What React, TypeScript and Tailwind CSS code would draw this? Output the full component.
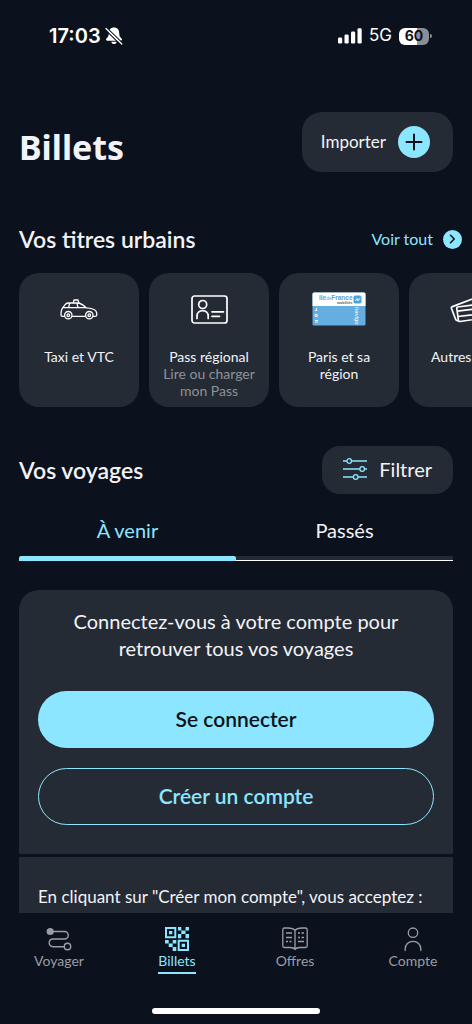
import React, { useState } from 'react';

type Tab = 'upcoming' | 'past';

function MutedBell() {
  return (
    <svg width="18" height="18" viewBox="0 0 18 18" aria-hidden="true">
      <path d="M9 .5c-3.300 0-5 2.200-5.200 5.200-.1 2.700-.4 3.700-1.600 5-.8.800-1.200 1.200-1.200 1.900 0 .7.500 1.100 1.300 1.100h13.400c.8 0 1.300-.4 1.300-1.100 0-.7-.4-1.100-1.200-1.900-1.200-1.300-1.500-2.300-1.600-5C14 2.700 12.300.5 9 .5Z" fill="#fff" />
      <path d="M6.300 14.700h5.400c-.3 1.400-1.300 2.300-2.700 2.300s-2.400-.9-2.700-2.300Z" fill="#fff" />
      <path d="M1.600.7 17.600 16.200" stroke="#0c121d" strokeWidth="1.300" />
      <path d="M0 2.500 15.800 18" stroke="#0c121d" strokeWidth="1.100" />
      <path d="M1 1.500 16.800 17" stroke="#fff" strokeWidth="1.300" strokeLinecap="round" />
    </svg>
  );
}

function Signal() {
  return (
    <svg width="24" height="16" viewBox="0 0 24 16" fill="#fff" aria-hidden="true">
      <rect x="0" y="9.500" width="4.200" height="6" rx="1.300" />
      <rect x="6.500" y="6.500" width="4.200" height="9" rx="1.300" />
      <rect x="13" y="3.500" width="4.200" height="12" rx="1.300" />
      <rect x="19.500" y="0.300" width="4.200" height="15.200" rx="1.300" />
    </svg>
  );
}

function StatusBar() {
  return (
    <div className="flex h-[72px] shrink-0 items-center justify-between pr-10 pl-[49px] font-['Inter',sans-serif] text-white">
      <div className="flex items-center gap-1">
        <span className="text-xl font-semibold">17:03</span>
        <MutedBell />
      </div>
      <div className="flex items-center gap-[7px]">
        <Signal />
        <span className="text-[17px]">5G</span>
        <div className="flex items-center gap-px">
          <span className="flex h-[17px] w-[30px] items-center justify-center rounded-md bg-linear-to-r from-white from-60% to-[#8b8e94] to-60% text-sm font-bold text-[#0c121d]">
            60
          </span>
          <span className="h-1 w-0.5 rounded-r-full bg-[#8b8e94]" />
        </div>
      </div>
    </div>
  );
}

function TaxiIcon() {
  return (
    <svg width="38" height="21" viewBox="0 0 38 21" fill="none" stroke="#fff" strokeWidth="1.300" strokeLinejoin="round" strokeLinecap="round" aria-hidden="true">
      <path d="M4.300 17.300H2.400c-.9 0-1.400-.5-1.400-1.300 0-3 .3-5.800 1.800-7.300L5.500 5.200C6.300 4.300 7.300 4 8.500 4h9c3 0 5.500 1.700 8.600 4.800 4.600.3 8.500 1.200 9.800 3.200.7 1.100.9 2.500.9 3.800 0 1-.5 1.500-1.400 1.500h-2.200M12.200 17.300h13M2.800 8.700h23.300M9.700 4.200 8.600 8.500M17 4l.9 4.600" />
      <path d="M13.300 3.800 14 1h4l.8 2.900" />
      <circle cx="8.300" cy="16.200" r="3.700" />
      <circle cx="8.300" cy="16.200" r="1.300" />
      <circle cx="29.300" cy="16.200" r="3.700" />
      <circle cx="29.300" cy="16.200" r="1.300" />
    </svg>
  );
}

function BadgeIcon() {
  return (
    <svg width="37" height="29" viewBox="0 0 37 29" fill="none" stroke="#fff" strokeWidth="1.700" strokeLinecap="round" aria-hidden="true">
      <rect x="1" y="1" width="35" height="27" rx="2.500" />
      <circle cx="11.700" cy="9.500" r="4" />
      <path d="M6 23.500v-2.300c0-3.400 2.400-5.500 5.600-5.500s5.600 2.100 5.600 5.500v2.300M21 16.800h11.500M21 21.300h7.500" />
    </svg>
  );
}

function NavigoCard() {
  return (
    <svg width="54" height="34" viewBox="0 0 54 34" fontFamily="'Liberation Sans', Arial, sans-serif" aria-hidden="true">
      <rect x="0.500" y="0.500" width="53" height="33" rx="1.500" fill="#64aee0" />
      <path d="M.5 14V2Q.5.500 2 .5h50q1.500 0 1.500 1.500v12Z" fill="#fff" />
      <text x="7" y="8" fontSize="6.500" fontWeight="bold" fill="#5c9ed2">
        île<tspan fontSize="4.500" fontWeight="normal">de</tspan>France
      </text>
      <text x="25" y="12" fontSize="3.500" fontWeight="bold" fill="#55565c">mobilités</text>
      <rect x="41.500" y="3.500" width="8" height="8" rx="1.800" fill="#4f9fd8" />
      <path d="m43.200 9 2-2.500.6 2.500 2.500-3.200" stroke="#fff" strokeWidth="0.900" fill="none" />
      <text transform="translate(43 15) rotate(90)" fontSize="6" fill="#fff">navigo</text>
      <path d="M4.500 16v3M3 18.500h2M3.200 22.500h2v2h-2zM3 28.500h3M3 30h3" stroke="#fff" strokeWidth="0.900" fill="none" />
    </svg>
  );
}

function TicketsIcon() {
  return (
    <svg width="38" height="27" viewBox="0 0 38 27" fill="none" stroke="#fff" strokeWidth="1.700" strokeLinejoin="round" strokeLinecap="round" aria-hidden="true">
      <path d="M7.500 11 35 7.500c.9-.1 1.400.3 1.500 1.200l1 11.500c.1.900-.3 1.400-1.200 1.500L10 25.500c-.9.100-1.500-.3-1.600-1.200L6.800 12.500c-.1-.9 0-1.400.7-1.500ZM7.300 15.200l29.500-3.700M8 20.500l29-3.500" />
      <path d="M8.300 24.500c-1.400.5-2 .2-2.500-.8L1.500 12.500c-.3-.9 0-1.500.9-1.900L27 1.200c.9-.3 1.600 0 2 .8l2 5.800" />
    </svg>
  );
}

function FilterIcon() {
  return (
    <svg width="24" height="22" viewBox="0 0 24 22" fill="none" stroke="#8ce6ff" strokeWidth="1.300" aria-hidden="true">
      <path d="M0 3h3.900M8.500 3H24M0 11h16.900M21.500 11H24M0 19h10.400M15 19h9" />
      <circle cx="6.200" cy="3" r="2.300" />
      <circle cx="19.200" cy="11" r="2.300" />
      <circle cx="12.700" cy="19" r="2.300" />
    </svg>
  );
}

function RouteIcon() {
  return (
    <svg width="26" height="24" viewBox="0 0 26 24" fill="none" stroke="currentColor" strokeWidth="1.400" aria-hidden="true">
      <circle cx="4.200" cy="4.500" r="3.600" fill="currentColor" stroke="none" />
      <path d="M5 4.500h13.500a3.700 3.700 0 0 1 0 7.500H6.500a3.900 3.900 0 0 0 0 7.700H18" />
      <circle cx="21.500" cy="19.500" r="3.200" />
    </svg>
  );
}

function QrIcon() {
  return (
    <svg width="24" height="24" viewBox="0 0 24 24" fill="currentColor" aria-hidden="true">
      <path fillRule="evenodd" d="M0 0h11.300v11.300H0zM2 2v7.300h7.300V2zM12.700 12.700H24V24H12.700zM14.700 14.700V22H22v-7.300z" />
      <path d="M4 4h3.300v3.300H4zM16.700 16.700H20V20h-3.300zM13 0h3.300v3.500H13zM20.500 0H24v3.500h-3.500zM16.300 3.500h4.200V7h-4.200zM13 7h3.300v4.300H13zM20.500 7H24v4.300h-3.500zM0 13h3.700v3.500H0zM3.700 16.500h4V20h-4zM7.700 13h3.600v3.500H7.700zM7.700 20h3.600v4H7.700z" />
    </svg>
  );
}

function BookIcon() {
  return (
    <svg width="26" height="24" viewBox="0 0 26 24" fill="none" stroke="currentColor" strokeWidth="1.300" strokeLinejoin="round" aria-hidden="true">
      <path d="M13 3.500C11.500 1.500 9 1 6 1H2.500C1.500 1 .8 1.600.8 2.500V19c0 .9.600 1.500 1.500 1.500H8c2.500 0 4.200.6 5 2 .8-1.400 2.500-2 5-2h5.700c.9 0 1.500-.6 1.500-1.500V2.500c0-.9-.7-1.500-1.700-1.500H20c-3 0-5.500.5-7 2.500Zm0 0v19" />
      <path d="M4 6h6M4 10.500h6M4 14.500h2M7.500 14.500h2M16 6h2M19.500 6H22M16 10.500h2M19.500 10.500H22M16 14.500h6" strokeWidth="1.700" />
    </svg>
  );
}

function PersonIcon() {
  return (
    <svg width="18" height="25" viewBox="0 0 18 25" fill="none" stroke="currentColor" strokeWidth="1.300" strokeLinecap="round" aria-hidden="true">
      <circle cx="9" cy="5.700" r="4.700" />
      <path d="M1.200 23.500V22c0-4.500 3.300-7.600 7.800-7.600s7.800 3.100 7.800 7.600v1.500" />
    </svg>
  );
}

const passes = [
  { title: 'Taxi et VTC', icon: <TaxiIcon /> },
  { title: 'Pass régional', note: 'Lire ou charger mon Pass', icon: <BadgeIcon /> },
  { title: 'Paris et sa région', icon: <NavigoCard /> },
  { title: 'Autres titres', icon: <TicketsIcon /> },
];

const navItems = [
  { label: 'Voyager', icon: <RouteIcon /> },
  { label: 'Billets', icon: <QrIcon />, active: true },
  { label: 'Offres', icon: <BookIcon /> },
  { label: 'Compte', icon: <PersonIcon /> },
];

function App() {
  const [tab, setTab] = useState<Tab>('upcoming');

  const tabs: { id: Tab; label: string }[] = [
    { id: 'upcoming', label: 'À venir' },
    { id: 'past', label: 'Passés' },
  ];

  return (
    <div className="flex h-dvh flex-col bg-[#0c121d] font-['Lato',sans-serif] text-[#f3f3f7]">
      <StatusBar />

      <main className="min-h-0 flex-1 overflow-x-hidden overflow-y-auto pt-10 [scrollbar-width:none]">
        <header className="flex items-end justify-between px-[19px]">
          <h1 className="font-['Noto_Sans',sans-serif] text-[34px] leading-[50px] font-bold">Billets</h1>
          <button type="button" className="flex h-[60px] items-center gap-3 rounded-[20px] bg-[#252b35] pr-[23px] pl-[19px] text-[17px]">
            Importer
            <span className="flex size-8 items-center justify-center rounded-full bg-[#8ce6ff]">
              <svg width="18" height="18" viewBox="0 0 18 18" stroke="#0c121d" strokeWidth="2" strokeLinecap="round" aria-hidden="true">
                <path d="M9 1.500v15M1.500 9h15" />
              </svg>
            </span>
          </button>
        </header>

        {/* Urban passes */}
        <section>
          <div className="mt-[53px] flex h-7 items-center justify-between pr-[10px] pl-[19px]">
            <h2 className="text-[23px] leading-7 font-semibold">Vos titres urbains</h2>
            <a href="#titres" className="flex items-center gap-[10px] text-base text-[#8ce6ff]">
              Voir tout
              <span className="flex size-[19px] items-center justify-center rounded-full bg-[#8ce6ff]">
                <svg width="7" height="10" viewBox="0 0 7 10" fill="none" stroke="#0c121d" strokeWidth="1.600" strokeLinecap="round" strokeLinejoin="round" aria-hidden="true">
                  <path d="m1.500 1.300 3.700 3.700-3.700 3.700" />
                </svg>
              </span>
            </a>
          </div>
          <div className="mt-5 flex gap-[10px] overflow-x-auto px-[19px] [scrollbar-width:none]">
            {passes.map((pass) => (
              <button
                key={pass.title}
                type="button"
                className="flex min-h-[134px] w-[120px] shrink-0 flex-col items-center rounded-[20px] bg-[#252b35] px-2 pt-[17px] pb-2 text-sm leading-[17px]"
              >
                <span className="mb-5 flex h-[38px] items-center">{pass.icon}</span>
                <span className="px-2">{pass.title}</span>
                {pass.note && <span className="text-[#8d9199]">{pass.note}</span>}
              </button>
            ))}
          </div>
        </section>

        {/* Trips */}
        <section className="mt-[39px] px-[19px]">
          <div className="flex items-center justify-between">
            <h2 className="text-[23px] leading-7 font-semibold">Vos voyages</h2>
            <button type="button" className="flex h-12 items-center gap-3 rounded-[18px] bg-[#252b35] px-[21px] pb-0.5 text-xl">
              <FilterIcon />
              Filtrer
            </button>
          </div>

          <div role="tablist" className="grid grid-cols-2">
            {tabs.map(({ id, label }) => (
              <button
                key={id}
                type="button"
                role="tab"
                aria-selected={tab === id}
                onClick={() => setTab(id)}
                className={`flex flex-col pt-[23px] text-xl leading-[26px] ${tab === id ? 'text-[#8ce6ff]' : ''}`}
              >
                <span className="w-full pb-[13px] text-center">{label}</span>
                <span
                  className={`h-[5px] w-full ${tab === id ? 'rounded-t-xs bg-[#8ce6ff]' : 'border-b border-white bg-[#252b35]'}`}
                />
              </button>
            ))}
          </div>

          <div className="mt-[29px] flex flex-col gap-[3px] overflow-hidden rounded-[20px]">
            <div className="bg-[#252b35] px-[19px] pt-[18px] pb-[29px]">
              <p className="px-5 text-center text-xl leading-[27px]">
                Connectez-vous à votre compte pour retrouver tous vos voyages
              </p>
              <button type="button" className="mt-[29px] h-[57px] w-full rounded-full bg-[#8ce6ff] pb-0.5 text-[21px] font-semibold text-[#0c121d]">
                Se connecter
              </button>
              <button type="button" className="mt-5 h-[57px] w-full rounded-full border border-[#8ce6ff] pb-0.5 text-[21px] font-semibold text-[#8ce6ff]">
                Créer un compte
              </button>
            </div>
            <div className="bg-[#252b35] px-[19px] pt-7 pb-10 text-[17px] leading-6">
              <p>En cliquant sur "Créer mon compte", vous acceptez :</p>
            </div>
          </div>
        </section>
      </main>

      <footer className="flex shrink-0 flex-col items-center pb-[10px]">
        <nav className="grid w-full grid-cols-4">
          {navItems.map((item) => (
            <a
              key={item.label}
              href={`#${item.label.toLowerCase()}`}
              className={`flex flex-col items-center pt-[14px] text-sm leading-5 ${item.active ? 'text-[#8ce6ff]' : 'text-[#9a9da4]'}`}
            >
              <span className="flex h-6 items-center">{item.icon}</span>
              <span className={`border-b-2 pb-px ${item.active ? 'border-[#8ce6ff]' : 'border-transparent'}`}>
                {item.label}
              </span>
            </a>
          ))}
        </nav>
        <div className="mt-[34px] h-1.5 w-[168px] rounded-full bg-white" />
      </footer>
    </div>
  );
}

export default App;
